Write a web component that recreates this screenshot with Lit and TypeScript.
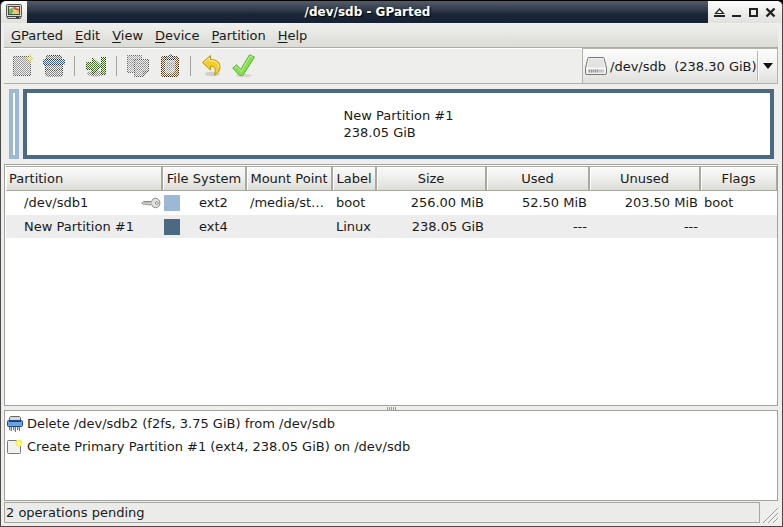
import { LitElement, html, css, svg, type TemplateResult } from "lit";
import { customElement, property, state } from "lit/decorators.js";

interface Partition {
  name: string;
  locked: boolean;
  color: string;
  fs: string;
  mount: string;
  label: string;
  size: string;
  used: string;
  unused: string;
  flags: string;
}

const PARTITIONS: Partition[] = [
  { name: "/dev/sdb1", locked: true, color: "#9db8d2", fs: "ext2", mount: "/media/st…", label: "boot", size: "256.00 MiB", used: "52.50 MiB", unused: "203.50 MiB", flags: "boot" },
  { name: "New Partition #1", locked: false, color: "#4b6983", fs: "ext4", mount: "", label: "Linux", size: "238.05 GiB", used: "---", unused: "---", flags: "" },
];

const OPERATIONS = [
  { icon: "shred", text: "Delete /dev/sdb2 (f2fs, 3.75 GiB) from /dev/sdb" },
  { icon: "create", text: "Create Primary Partition #1 (ext4, 238.05 GiB) on /dev/sdb" },
];

const MENUS = ["GParted", "Edit", "View", "Device", "Partition", "Help"];

const TOOLS: (string | null)[][] = [
  ["new", "New"], ["delete", "Delete"], [null],
  ["resize", "Resize/Move"], [null],
  ["copy", "Copy"], ["paste", "Paste"], [null],
  ["undo", "Undo"], ["apply", "Apply"],
];

const GLYPHS: Record<string, TemplateResult> = {
  new: svg`
    <path d="M3.500 2.500h17v19h-17z" fill="#999" stroke="#555"/>
    <path d="M20 0l1 3 3 1.500-3 1.500-1 3-1-3-3-1.500 3-1.500z" fill="#e0d98a" stroke="#b7b04c" stroke-width=".6"/>`,
  delete: svg`
    <path d="M4.500 6V2.500L6 1.500h12l1.500 1V6" fill="#777" stroke="#333"/>
    <rect x="1.500" y="5.500" width="21" height="5" rx="1" fill="#40608c" stroke="#152c50"/>
    <path d="M3.500 11v9l1 2h15l1-2v-9z" fill="#888" stroke="#444"/>
    <path d="M4 15.500h4l2 1h4l2-1h4" fill="none" stroke="#555"/>`,
  resize: svg`
    <ellipse cx="12" cy="19.500" rx="9" ry="3" fill="#888"/>
    <path d="M2.500 8.500h6v-5l9 8.500-9 8.500v-5h-6z" fill="#4a7230" stroke="#22380f"/>
    <rect x="17.500" y="3.500" width="4" height="17" fill="#4a7230" stroke="#22380f"/>`,
  copy: svg`
    <path d="M1.500 1.500h14v17h-14z" fill="#aaa" stroke="#666"/>
    <path d="M4 5.500h9M4 8.500h9M4 11.500h9" stroke="#888"/>
    <path d="M8.500 5.500h14v12l-5 5h-9z" fill="#a2a2a2" stroke="#505050"/>
    <path d="M11 9.500h9M11 12.500h9M11 15.500h6" stroke="#7c7c7c"/>
    <path d="M22.500 17.500h-5v5z" fill="#777" stroke="#505050"/>`,
  paste: svg`
    <rect x="3.500" y="2.500" width="17" height="20" rx="2" fill="#7c5a28" stroke="#2b1d0a"/>
    <path d="M6.500 5.500h11v11l-3.500 3.500h-7.500z" fill="#b0b0b0" stroke="#555"/>
    <path d="M8 9.500h8M8 11.500h8M8 13.500h8M8 15.500h5" stroke="#888"/>
    <path d="M7.500 5.500v-3h2.500l1-1.500h2l1 1.500h2.500v3z" fill="#666" stroke="#222"/>`,
  undo: svg`
    <ellipse cx="12.500" cy="20" rx="7.500" ry="2.300" fill="#d0cfca"/>
    <path d="M2.500 8.500L10.500 1.500V5.500C17.500 5.500 20 9 20 13.500c0 3-2 5.500-5.500 7.500 1.500-5.500 1-9-4-9v4z" fill="#f2cf2c" stroke="#bd9310" stroke-linejoin="round"/>
    <path d="M4.300 8.500l5.200-4.500v2.600c6 0 9.400 2.200 9.400 6.900" fill="none" stroke="#fdf09a"/>`,
  apply: svg`
    <ellipse cx="12" cy="21.500" rx="8" ry="1.800" fill="#d6d6d2"/>
    <path d="M.7 14l4-3.200 4 4.600L17.500 .8l5 2.200L10.800 21.500H7.500z" fill="#86e04c" stroke="#5fae48" stroke-linejoin="round"/>
    <path d="M2.400 14.100l2.200-1.700 4.500 5.100L18 2.200l3 1.300" fill="none" stroke="#b9f28e"/>`,
};

const STIPPLED = new Set(["new", "delete", "resize", "copy", "paste"]);

const toolIcon = (name: string) => html`
  <svg width="24" height="24" viewBox="0 0 24 24" aria-hidden="true">
    ${STIPPLED.has(name)
      ? svg`
        <defs>
          <pattern id="dots" width="2" height="2" patternUnits="userSpaceOnUse" shape-rendering="crispEdges">
            <path d="M0 0h1v1h-1zM1 1h1v1h-1z" fill="#fff"/>
          </pattern>
          <mask id="stipple" maskUnits="userSpaceOnUse" x="0" y="0" width="24" height="24">
            <rect width="24" height="24" fill="url(#dots)"/>
          </mask>
        </defs>
        <g mask="url(#stipple)">${GLYPHS[name]}</g>`
      : GLYPHS[name]}
  </svg>`;

const appIcon = html`
  <svg width="16" height="16" viewBox="0 0 16 16" aria-hidden="true">
    <path d="M.5 1.500q0-1 1-1h13q1 0 1 1v10l-1 3h-13l-1-3z" fill="#d6d6d2" stroke="#555753"/>
    <rect x="2.500" y="2.500" width="11" height="8" fill="#f3eccb" stroke="#44504a"/>
    <path d="M3 10V5l3-1 2 3-2 3z" fill="#74b84c"/>
    <path d="M6 4l3-1 4 2v2L9 6z" fill="#e3603c"/>
    <path d="M8 7l5 0v3H7z" fill="#ecca62"/>
    <path d="M1 12.500h14" stroke="#444"/><path d="M10 13.500h3" stroke="#2f2f2f"/>
  </svg>`;

const driveIcon = html`
  <svg class="drive" width="22" height="18" viewBox="0 0 22 18" aria-hidden="true">
    <path d="M4 .5h14q1 0 1.200 1L21.500 11v5q0 1.500-1.500 1.500H2Q.5 17.500.5 16v-5L2.800 1.500Q3 .5 4 .5z" fill="#f1f1f0" stroke="#777"/>
    <path d="M4.500 2h13l2 8.500h-17z" fill="#e3e3e2"/>
    <path d="M1 11.500h20" stroke="#fff"/>
    <rect x="3" y="12.500" width="16" height="3" fill="#c5c5c5"/>
    <path d="M4.500 12.500v3M6.500 12.500v3M8.500 12.500v3M10.500 12.500v3M12.500 12.500v3" stroke="#9a9a9a"/>
  </svg>`;

const keyIcon = html`
  <svg class="key" width="20" height="12" viewBox="0 0 20 12" role="img" aria-label="Mounted">
    <path d="M10.500 4.500L3 4.500L.7 6l1.500 1.500 1.500-.6 1 1 1.500-1 1 1 3.600-.3Q12 10.800 14.300 10.800q4.600-.6 4.600-4.800T14.300 1.200Q11.500 1.400 10.500 4.500z" fill="#e3e3e1" stroke="#8c8c88"/>
    <circle cx="15.800" cy="6" r="1.400" fill="#fff" stroke="#8c8c88"/>
    <path d="M3 5.800h8" stroke="#aaa"/>
  </svg>`;

const opIcons: Record<string, TemplateResult> = {
  shred: html`
    <svg width="16" height="16" viewBox="0 0 16 16" aria-hidden="true">
      <path d="M2.500 5V1.500l1-1h9l1 1V5" fill="#d8d8d6" stroke="#666"/>
      <rect x=".5" y="4.500" width="15" height="6" rx="1" fill="#6aa2e2" stroke="#1f4a87"/>
      <path d="M2 5.500h12" stroke="#1d3d6d"/>
      <path d="M2.500 11v3M4.500 11v4M6.500 11v3M8.500 11v5M10.500 11v3M12.500 11v4" stroke="#777"/>
      <path d="M3.500 11v4M7.500 11v4M11.500 11v3" stroke="#ccc"/>
    </svg>`,
  create: html`
    <svg width="16" height="16" viewBox="0 0 16 16" aria-hidden="true">
      <rect x=".5" y="1.500" width="13" height="13" rx="1" fill="#f2f2f1" stroke="#777"/>
      <circle cx="12" cy="4" r="3.600" fill="#fbf04c"/>
      <circle cx="12" cy="4" r="1.500" fill="#fffde0"/>
    </svg>`,
};

const base = css`
  *, *::before, *::after { box-sizing: border-box; }
  button {
    margin: 0; padding: 0; border: 0; background: none;
    font: inherit; color: inherit;
  }
  svg { display: block; flex: none; }
`;

@customElement("title-bar")
export class TitleBar extends LitElement {
  @property() heading = "";

  static styles = [base, css`
    :host {
      display: flex; height: 22px; flex: none; color: #fff;
      background: linear-gradient(#555c69, #2d3646 45%, #1a2638 60%, #172335);
    }
    .cap {
      display: flex; align-items: center; flex: none;
      background: linear-gradient(#fcfcfc, #e0e0dd);
    }
    .left { width: 26px; padding-left: 5px; border-top-left-radius: 4px; }
    .right { border-top-right-radius: 4px; padding: 0 3px; color: #222; }
    .heading {
      flex: 1; margin: 0; text-align: center; font-size: 12px; line-height: 22px;
      font-weight: bold; text-shadow: 1px 1px 1px #000;
    }
    .control { width: 17px; height: 22px; display: grid; place-items: center; }
  `];

  render() {
    const control = (label: string, shape: TemplateResult) => html`
      <button class="control" aria-label=${label}>
        <svg width="11" height="11" viewBox="0 0 11 11" fill="none" stroke="#222">${shape}</svg>
      </button>`;
    return html`
      <div class="cap left">${appIcon}</div>
      <h1 class="heading">${this.heading}</h1>
      <div class="cap right">
        ${control("Shade", svg`<path d="M1.500 6.500L5.500 2l4 4.500z" stroke-width="1.200"/><path d="M0 9h11" stroke-width="2"/>`)}
        ${control("Minimize", svg`<path d="M1 9h9" stroke-width="2"/>`)}
        ${control("Maximize", svg`<rect x="2" y="2" width="7" height="7" stroke-width="2"/>`)}
        ${control("Close", svg`<path d="M1.500 1.500l8 8M9.500 1.500l-8 8" stroke-width="2.400"/>`)}
      </div>`;
  }
}

@customElement("tool-bar")
export class ToolBar extends LitElement {
  static styles = [base, css`
    :host {
      display: flex; justify-content: space-between; height: 36px; flex: none;
      margin: 0 4px 0 3px; border-top: 1px solid #fff; border-bottom: 1px solid #b0b0aa;
    }
    .tools { display: flex; padding-left: 2px; }
    .tool { width: 32px; display: grid; place-items: center; }
    .separator {
      width: 10px; height: 20px; margin: 7px 0 0; padding: 0 5px 0 4px; border: 0;
      background: linear-gradient(#a5a5a0, #a5a5a0) content-box;
    }
    .device {
      display: grid; align-items: center; margin-top: -1px;
      border: 1px solid #b3b3ac; border-bottom: 0;
      background: linear-gradient(#fbfbfb, #f2f2f1 50%, #dfdfdb);
    }
    .device > * { grid-area: 1 / 1; }
    .choice {
      appearance: none; width: 100%; height: 100%; margin: 0; border: 0; border-radius: 0;
      background: none; font: inherit; color: #1a1a1a; padding: 0 20px 0 27px;
    }
    .drive { margin-left: 2px; pointer-events: none; }
    .arrow {
      justify-self: end; pointer-events: none; width: 20px; height: 30px;
      display: grid; place-items: center; border-left: 1px solid #b3b3ac;
      box-shadow: inset 1px 0 #fff;
    }
  `];

  render() {
    return html`
      <div class="tools" role="toolbar" aria-label="Main">
        ${TOOLS.map(([name, label]) =>
          !name
            ? html`<hr class="separator">`
            : html`<button class="tool" aria-label=${label ?? ""} ?disabled=${STIPPLED.has(name)}>${toolIcon(name)}</button>`)}
      </div>
      <div class="device">
        <select class="choice" aria-label="Device">
          <option>/dev/sdb\u00a0 (238.30 GiB)</option>
        </select>
        ${driveIcon}
        <span class="arrow">
          <svg width="10" height="6" viewBox="0 0 10 6" aria-hidden="true"><path d="M0 0h10L5 6z" fill="#111"/></svg>
        </span>
      </div>`;
  }
}

@customElement("partition-table")
export class PartitionTable extends LitElement {
  @property({ attribute: false }) rows: Partition[] = [];

  static styles = [base, css`
    :host { display: block; padding: 1px 0 0 1px; background: #fff; border: 1px solid #a2a29c; overflow: hidden; }
    .grid { width: 100%; table-layout: fixed; border-collapse: separate; border-spacing: 0; }
    .c-name { width: 157px; }
    .c-fs { width: 84px; }
    .c-mount { width: 86px; }
    .c-label { width: 44px; }
    .c-size { width: 110px; }
    .c-used { width: 103px; }
    .c-unused { width: 111px; }
    th {
      height: 25px; padding: 0; font-weight: normal; text-align: center; white-space: nowrap;
      background: linear-gradient(#fafafa, #eeeeec 50%, #dcdcd7);
      border: solid #a9a9a2; border-width: 1px 2px 1px 0;
      box-shadow: inset 1px 1px #fff;
    }
    th:first-child { text-align: left; padding-left: 3px; }
    th:last-child { border-right-width: 1px; }
    td {
      height: 24px; padding: 0 3px; white-space: nowrap; overflow: hidden;
      text-overflow: ellipsis; border-bottom: 1px solid #fff;
    }
    .striped td { background: #ededed; }
    .name { display: flex; align-items: center; justify-content: space-between; padding-left: 15px; }
    .key { margin-right: -1px; }
    .fs { display: flex; align-items: center; gap: 19px; margin-left: -2px; }
    .swatch { width: 16px; height: 16px; }
    .number { text-align: right; }
  `];

  render() {
    return html`
      <table class="grid">
        <colgroup>
          <col class="c-name"><col class="c-fs"><col class="c-mount"><col class="c-label">
          <col class="c-size"><col class="c-used"><col class="c-unused"><col>
        </colgroup>
        <thead>
          <tr>
            <th scope="col">Partition</th><th scope="col">File System</th>
            <th scope="col">Mount Point</th><th scope="col">Label</th>
            <th scope="col">Size</th><th scope="col">Used</th>
            <th scope="col">Unused</th><th scope="col">Flags</th>
          </tr>
        </thead>
        <tbody>
          ${this.rows.map((p, i) => html`
            <tr class=${i % 2 ? "striped" : ""}>
              <td><div class="name">${p.name}${p.locked ? keyIcon : ""}</div></td>
              <td><div class="fs"><span class="swatch" style="background:${p.color}"></span>${p.fs}</div></td>
              <td>${p.mount}</td>
              <td>${p.label}</td>
              <td class="number">${p.size}</td>
              <td class="number">${p.used}</td>
              <td class="number">${p.unused}</td>
              <td>${p.flags}</td>
            </tr>`)}
        </tbody>
      </table>`;
  }
}

@customElement("app-root")
export class AppRoot extends LitElement {
  @state() private partitions = PARTITIONS;
  @state() private operations = OPERATIONS;

  static styles = [base, css`
    :host {
      display: block; background: #000; color: #1a1a1a;
      font: 13px/17px "DejaVu Sans", sans-serif;
    }
    .window {
      display: flex; flex-direction: column; min-height: 100vh;
      background: #eeeeec; border: 1px solid #4a4a4a; border-top-color: #000;
      border-radius: 6px 6px 0 0; overflow: hidden;
    }
    .menu {
      display: flex; flex: none; height: 25px; margin: 0 4px 0 3px; padding-left: 1px;
      background: linear-gradient(#efefed, #dcdcd6); border-bottom: 1px solid #acaca5;
    }
    .item { padding: 0 6px; }
    .item u { text-underline-offset: 2px; text-decoration-thickness: 1px; text-decoration-skip-ink: none; }
    .map { display: flex; flex: none; gap: 4px; height: 70px; margin: 5px 8px; }
    .segment { display: grid; place-items: center; background: #fff; border: 4px solid #9db8d2; flex: none; width: 10px; }
    .current { border-color: #4b6983; flex: 1; }
    .panes { display: flex; flex-direction: column; flex: 1; margin: 0 4px 0 3px; }
    .partitions { flex: 1 1 auto; }
    .handle { display: flex; flex: none; justify-content: center; gap: 1px; height: 4px; padding: 1px 0 0; }
    .notch { width: 1px; background: #999; }
    .operations {
      flex: none; min-height: 91px; margin: 0; padding: 1px 2px; list-style: none;
      background: #fff; border: 1px solid #a2a29c;
    }
    .operation { display: flex; align-items: center; gap: 4px; height: 23px; }
    .footer { display: flex; flex: none; gap: 1px; margin: 1px 4px 3px 3px; }
    .status { flex: 1; height: 21px; padding: 0 1px; line-height: 19px; background: #ebebe9; border: 1px solid #a8a8a2; }
    .grip { align-self: end; }
  `];

  render() {
    return html`
      <div class="window">
        <title-bar heading="/dev/sdb - GParted"></title-bar>
        <nav class="menu" aria-label="Menu">
          ${MENUS.map((m) => html`<button class="item"><u>${m[0]}</u>${m.slice(1)}</button>`)}
        </nav>
        <tool-bar></tool-bar>
        <div class="map">
          <div class="segment"></div>
          <div class="segment current"><div>New Partition #1<br>238.05 GiB</div></div>
        </div>
        <main class="panes">
          <partition-table class="partitions" .rows=${this.partitions}></partition-table>
          <div class="handle">${[0, 1, 2, 3, 4].map(() => html`<span class="notch"></span>`)}</div>
          <ul class="operations">
            ${this.operations.map((o) => html`<li class="operation">${opIcons[o.icon]}<span>${o.text}</span></li>`)}
          </ul>
        </main>
        <footer class="footer">
          <div class="status" role="status">${this.operations.length} operations pending</div>
          <svg class="grip" width="17" height="17" viewBox="0 0 17 17" fill="none" aria-hidden="true">
            <path d="M2 17L17 2M7 17L17 7M12 17l5-5" stroke="#999"/>
            <path d="M3 17L17 3M8 17l9-9M13 17l4-4" stroke="#fff" stroke-width=".6"/>
          </svg>
        </footer>
      </div>`;
  }
}
